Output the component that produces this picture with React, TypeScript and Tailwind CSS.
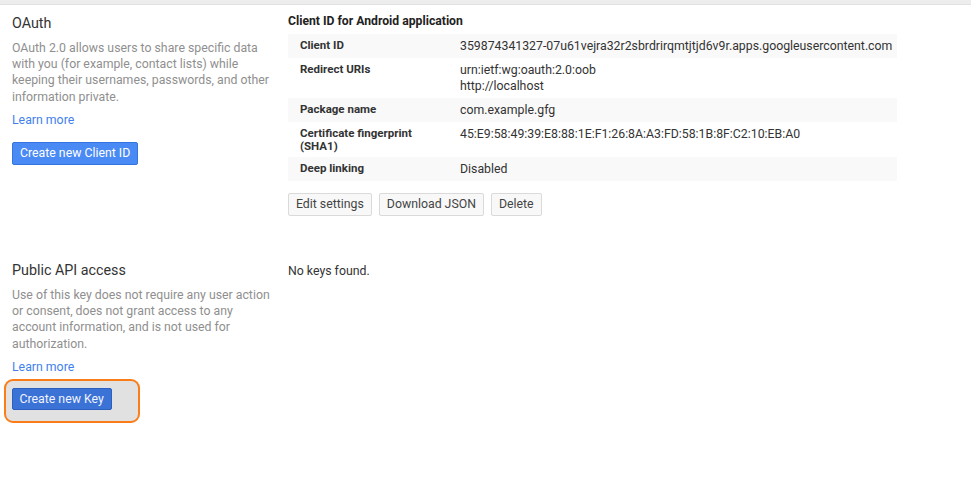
import React from 'react'

const rows: { label: string[]; value: string[]; shade: boolean }[] = [
  {
    label: ['Client ID'],
    value: ['359874341327-07u61vejra32r2sbrdrirqmtjtjd6v9r.apps.googleusercontent.com'],
    shade: true,
  },
  { label: ['Redirect URIs'], value: ['urn:ietf:wg:oauth:2.0:oob', 'http://localhost'], shade: false },
  { label: ['Package name'], value: ['com.example.gfg'], shade: true },
  {
    label: ['Certificate fingerprint', '(SHA1)'],
    value: ['45:E9:58:49:39:E8:88:1E:F1:26:8A:A3:FD:58:1B:8F:C2:10:EB:A0'],
    shade: false,
  },
  { label: ['Deep linking'], value: ['Disabled'], shade: true },
]

function SideInfo({ title, text }: { title: string; text: string }) {
  return (
    <>
      <h2 className="text-[14.3px] leading-5 text-[#333]">{title}</h2>
      <p className="mt-[7px] text-[12.3px] leading-[16.2px] text-[#8f8f8f]">{text}</p>
      <a className="mt-[7px] block text-[12.3px] leading-4 text-[#427fed]">Learn more</a>
    </>
  )
}

function GrayButton({ children }: { children: React.ReactNode }) {
  return (
    <button className="h-[23px] rounded-[2px] border border-[#dadada] bg-[#f8f8f8] px-[7px] text-[12.3px] leading-none text-[#444]">
      {children}
    </button>
  )
}

export default function App() {
  return (
    <div className="min-h-[497px] bg-white font-['Roboto','Liberation_Sans',sans-serif]">
      <div className="h-[5px] border-b border-[#e2e2e2] bg-[#ededed]" />

      {/* OAuth */}
      <div className="flex pt-[8px]">
        <div className="w-[288px] shrink-0 pl-3 pr-[16px]">
          <SideInfo
            title="OAuth"
            text="OAuth 2.0 allows users to share specific data with you (for example, contact lists) while keeping their usernames, passwords, and other information private."
          />
          <button className="mt-[14px] h-[23px] rounded-[2px] border border-[#3474e0] bg-[#4a8af4] px-[7px] text-[12.3px] leading-none text-white">
            Create new Client ID
          </button>
        </div>
        <div className="flex-1">
          <h3 className="text-[12.2px] font-bold leading-4 text-[#222]">Client ID for Android application</h3>
          <div className="mt-[5px] w-[609px]">
            {rows.map((r) => (
              <div
                key={r.label[0]}
                className={`grid grid-cols-[172px_1fr] py-1 ${r.shade ? 'bg-[#f9f9f9]' : 'bg-white'}`}
              >
                <div className="pl-3 pt-[1px] text-[11.5px] font-bold leading-[13px] text-[#333]">
                  {r.label.map((l) => (
                    <div key={l}>{l}</div>
                  ))}
                </div>
                <div className="text-[12.3px] leading-4 text-[#333]">
                  {r.value.map((v) => (
                    <div key={v}>{v}</div>
                  ))}
                </div>
              </div>
            ))}
          </div>
          <div className="mt-3 flex gap-[7px]">
            <GrayButton>Edit settings</GrayButton>
            <GrayButton>Download JSON</GrayButton>
            <GrayButton>Delete</GrayButton>
          </div>
        </div>
      </div>

      {/* Public API access */}
      <div className="mt-[44px] flex">
        <div className="w-[288px] shrink-0 pl-3 pr-[16px]">
          <SideInfo
            title="Public API access"
            text="Use of this key does not require any user action or consent, does not grant access to any account information, and is not used for authorization."
          />
          <div className="-ml-2 mt-[4px] h-[44px] w-[136px] rounded-[9px] border-[2.5px] border-[#fa7d19] bg-[#e1e1e1] pl-[5.5px] pt-[5.5px]">
            <button className="h-[22px] rounded-[2px] border border-[#2b5fc0] bg-[#3b72d6] px-[7px] text-[12.3px] leading-none text-[#f0f4ff]">
              Create new Key
            </button>
          </div>
        </div>
        <div className="flex-1 pt-[3px] text-[12.3px] leading-4 text-[#333]">No keys found.</div>
      </div>
    </div>
  )
}
